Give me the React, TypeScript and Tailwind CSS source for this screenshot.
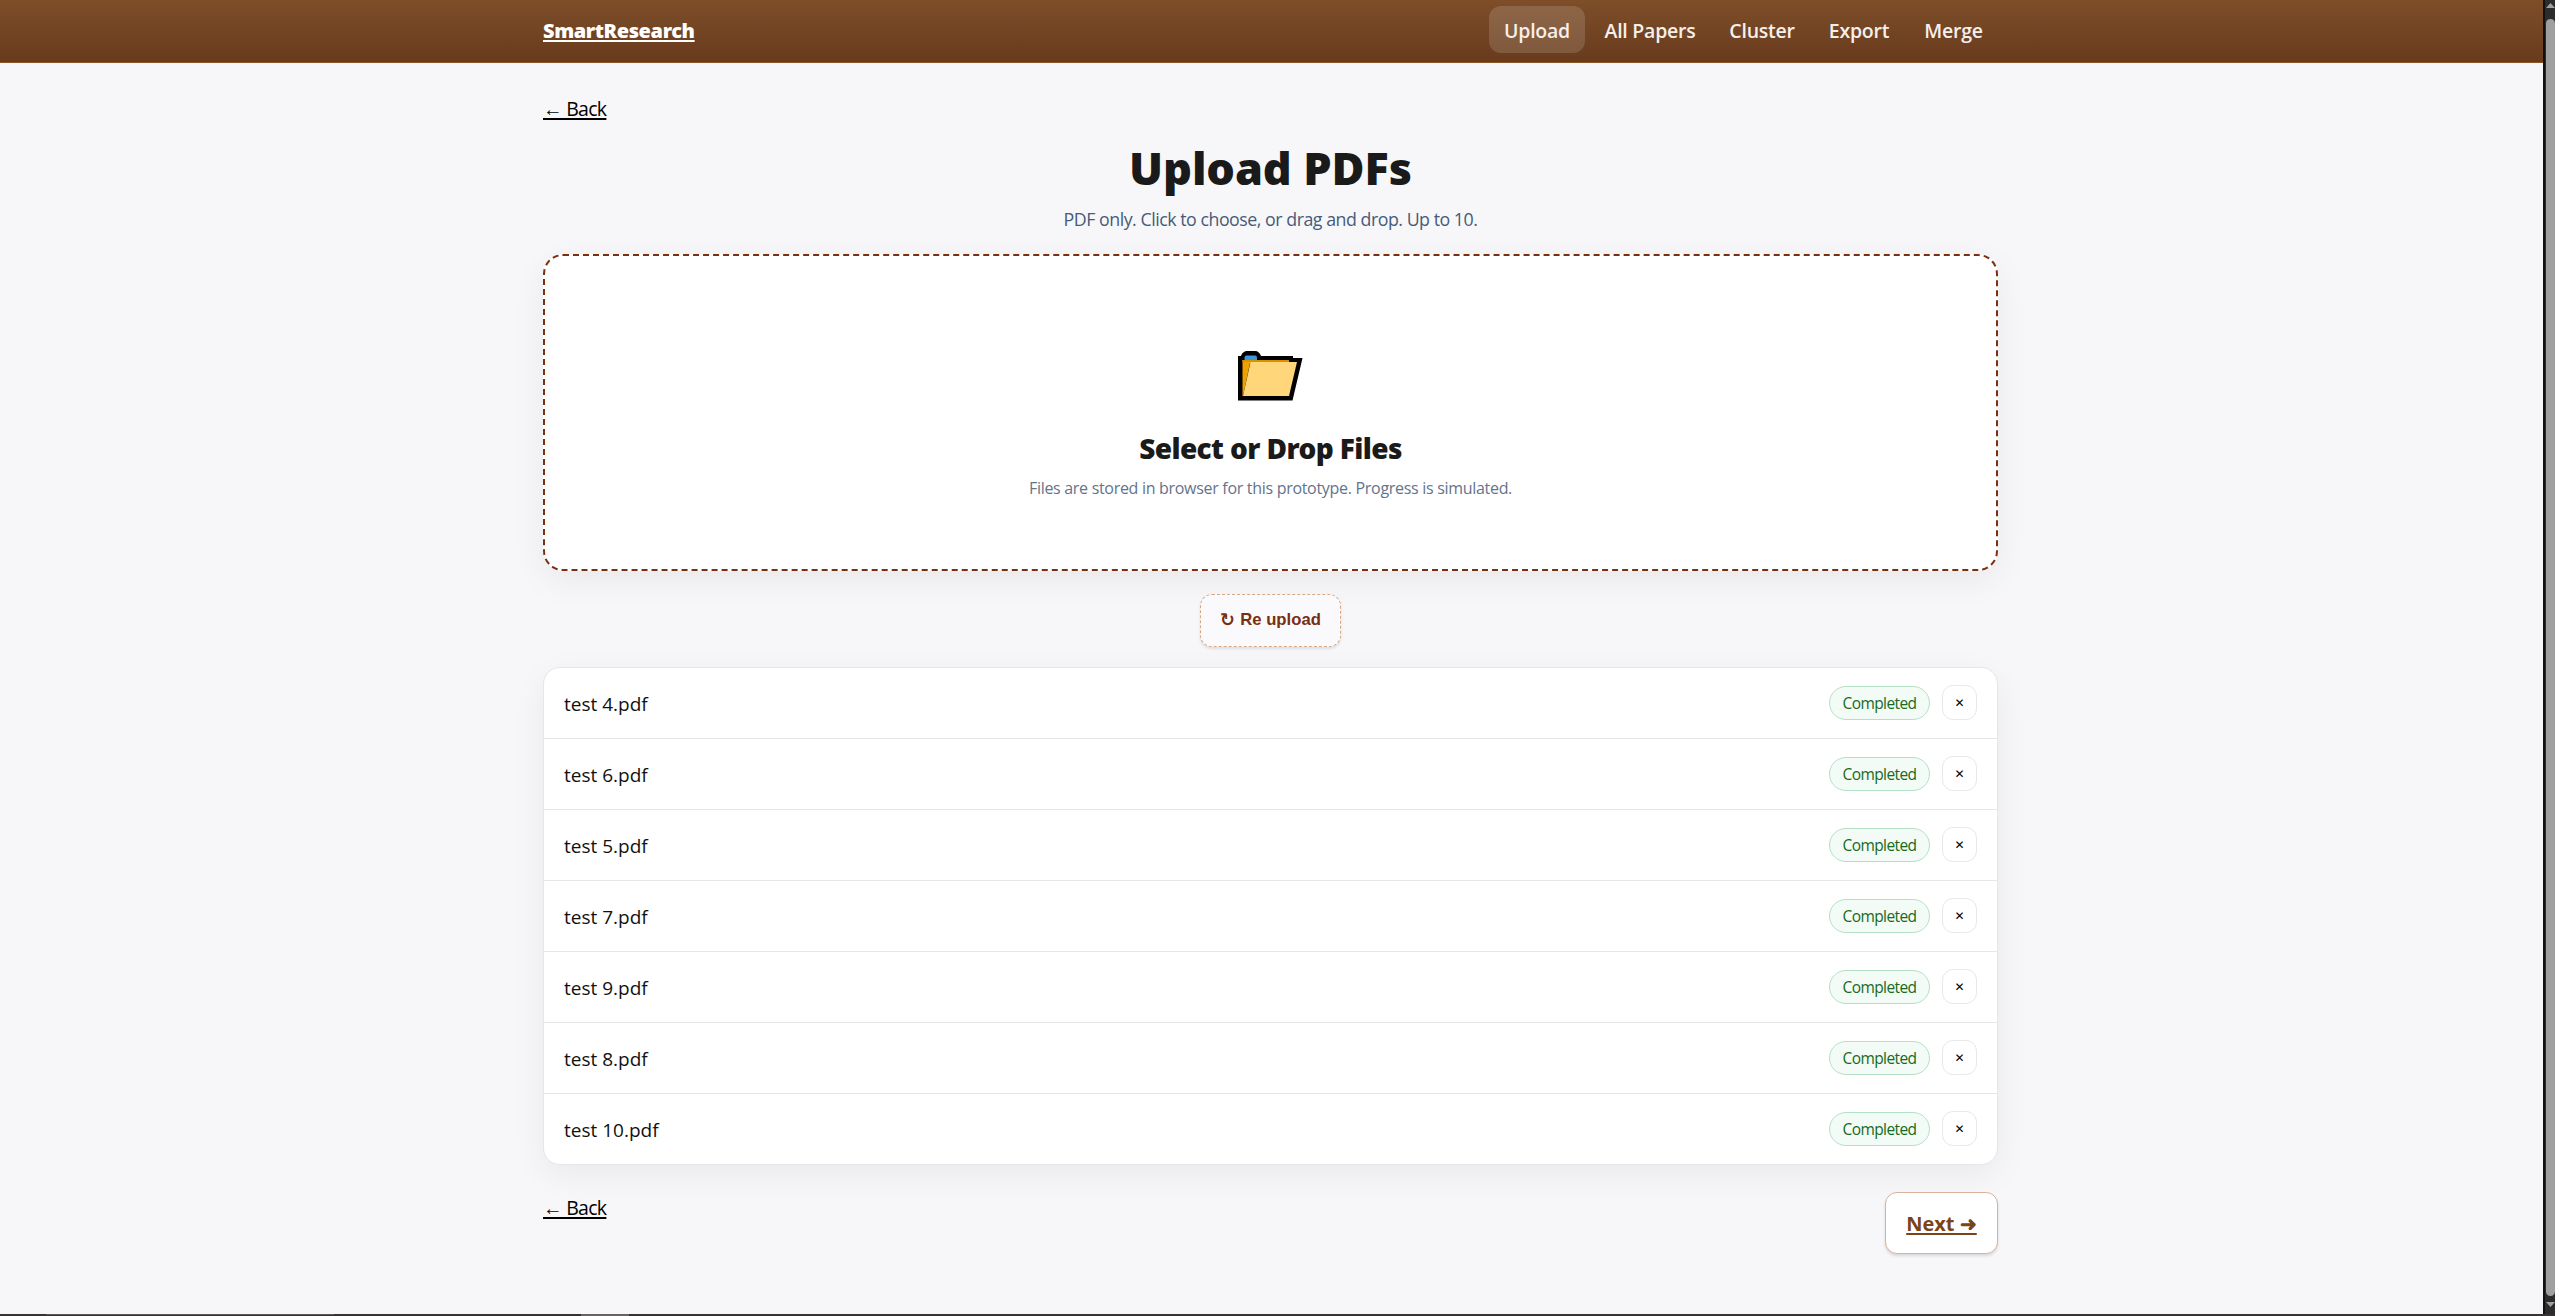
const navItems = [
  { label: "Upload", width: "w-[96px]", active: true },
  { label: "All Papers", width: "w-[122px]", active: false },
  { label: "Cluster", width: "w-[94px]", active: false },
  { label: "Export", width: "w-[92px]", active: false },
  { label: "Merge", width: "w-[89px]", active: false },
];

const files = ["test 4.pdf", "test 6.pdf", "test 5.pdf", "test 7.pdf", "test 9.pdf", "test 8.pdf", "test 10.pdf"];

function Header() {
  return (
    <header className="h-[63px] border-b border-[#8a5425] bg-linear-to-b from-[#7e4e29] to-[#683b1d]">
      <div className="ml-[543px] flex h-[62px] w-[1455px] items-center justify-between">
        <a className="font-['Noto_Sans',sans-serif] text-[20px] leading-[24px] font-black tracking-[-0.4px] whitespace-nowrap text-white underline decoration-2 underline-offset-2">
          SmartResearch
        </a>
        <nav className="mb-[3px] flex gap-1">
          {navItems.map((item) => (
            <a
              key={item.label}
              className={`flex h-[47px] items-center justify-center rounded-[12px] pt-[3px] text-[19.5px] leading-6 font-semibold tracking-[-0.25px] whitespace-nowrap text-[#f7efe9] ${item.width} ${
                item.active ? "bg-white/14" : ""
              }`}
            >
              {item.label}
            </a>
          ))}
        </nav>
      </div>
    </header>
  );
}

function BackLink() {
  return (
    <a className="block h-[26px] w-[64px] text-[19.5px] leading-[26px] tracking-[-0.7px] whitespace-nowrap text-black underline decoration-2 underline-offset-2">
      ← Back
    </a>
  );
}

function FolderIcon() {
  return (
    <svg className="block h-[50px] w-[65px]" viewBox="0 0 65 50">
      <path d="M0 5H3C4 2 6 0 10 0H17C20 0 22 2 23 5H55V7H64.500L54.500 49.500H0Z" fill="#000" />
      <path d="M6.500 9V6.500Q6.500 4.500 8.500 4.500H17Q19 4.500 19 6.500V9Z" fill="#3a96dd" />
      <path d="M4.500 9H51V12H12L5 45H4.500Z" fill="#eda200" />
      <path d="M12.500 11H59L51 45H5Z" fill="#ffd679" />
      <path d="M4.500 9H51V11H4.500Z" fill="#d99100" />
    </svg>
  );
}

function DropZone() {
  return (
    <section className="mt-[22px] flex h-[317px] flex-col items-center rounded-[20px] border-2 border-dashed border-[#7a2f0f] bg-white pt-[95px] shadow-[0_10px_34px_rgba(0,0,0,0.06)]">
      <FolderIcon />
      <h2 className="mt-[27px] font-['Noto_Sans',sans-serif] text-[28px] leading-[40px] font-black tracking-[-0.6px] text-[#1a1a1a]">
        Select or Drop Files
      </h2>
      <p className="mt-[8px] text-[16px] leading-[24px] tracking-[-0.3px] text-[#64748b]">
        Files are stored in browser for this prototype. Progress is simulated.
      </p>
    </section>
  );
}

function FileRow({ name, last }: { name: string; last: boolean }) {
  return (
    <li className={`flex items-center pr-5 pl-5 ${last ? "h-[70px]" : "h-[71px] border-b border-[#e5e6e9]"}`}>
      <span className="grow pt-[2px] text-[19px] leading-7 text-[#111]">{name}</span>
      <span className="flex h-[34px] w-[101px] items-center justify-center rounded-full border border-[#b5e0c8] bg-[#f2fbf6] text-[15.5px] leading-5 tracking-[-0.6px] text-[#166a22]">
        Completed
      </span>
      <button className="mb-px ml-3 flex h-[35px] w-[35px] items-center justify-center rounded-[11px] border border-[#e8e8ec] bg-white font-['DejaVu_Sans',sans-serif] text-[12px] leading-none text-black">
        ✕
      </button>
    </li>
  );
}

function Scrollbar() {
  return (
    <div className="flex w-3 shrink-0 flex-col items-end border-l-2 border-[#111] bg-[#2c2c2c]">
      <svg className="h-[19px] w-[9px] shrink-0" viewBox="0 0 9 19">
        <path d="M0 8L4.500 3L9 8Z" fill="#a0a0a0" />
      </svg>
      <div className="w-[9px] grow rounded-[5px] bg-[#a0a0a0]" />
      <svg className="h-[18px] w-[9px] shrink-0" viewBox="0 0 9 18">
        <path d="M0 6L4.500 11L9 6Z" fill="#a0a0a0" />
      </svg>
    </div>
  );
}

export default function App() {
  return (
    <div className="flex h-[1316px] w-[2555px] flex-col overflow-hidden bg-[#f7f7fa] font-['Open_Sans','Noto_Sans',sans-serif]">
      <div className="flex h-[1314px]">
        <div className="h-full w-[2543px]">
          <Header />
          <main className="ml-[543px] w-[1455px] pt-[33px]">
            <BackLink />
            <h1 className="mt-[16px] text-center font-['Noto_Sans',sans-serif] text-[45px] leading-[60px] font-black tracking-[-0.1px] text-[#1a1a1a]">
              Upload PDFs
            </h1>
            <p className="mt-[8px] text-center text-[17.8px] leading-[26px] tracking-[-0.48px] text-[#475b78]">
              PDF only. Click to choose, or drag and drop. Up to 10.
            </p>
            <DropZone />
            <div className="mt-[23px] flex justify-center">
              <button className="flex h-[53px] w-[141px] items-center justify-center gap-[5px] rounded-[12px] border border-dashed border-[#d9a880] bg-[#fafafc] pb-px font-['Liberation_Sans','DejaVu_Sans',sans-serif] text-[16.7px] font-bold whitespace-nowrap text-[#7a2f0f] shadow-[0_2px_3px_rgba(0,0,0,0.1)]">
                <span className="text-[18px] leading-5">↻</span>
                <span>Re upload</span>
              </button>
            </div>
            <ul className="mt-[20px] overflow-hidden rounded-[17px] border border-[#e5e6e9] bg-white shadow-[0_10px_34px_rgba(0,0,0,0.06)]">
              {files.map((name, index) => (
                <FileRow key={name} name={name} last={index === files.length - 1} />
              ))}
            </ul>
            <div className="mt-[27px] flex items-start justify-between">
              <div className="pt-[3px]">
                <BackLink />
              </div>
              <a className="flex h-[62px] w-[113px] items-center justify-center rounded-[12px] border border-[#d9b299] bg-white pt-px text-[20px] font-bold whitespace-nowrap text-[#7a4318] shadow-[0_2px_3px_rgba(0,0,0,0.12)]">
                <span className="underline decoration-2 underline-offset-2">Next ➜</span>
              </a>
            </div>
          </main>
        </div>
        <Scrollbar />
      </div>
      <div className="flex h-[2px] bg-[#353334]">
        <div className="ml-[46px] h-px w-[288px] bg-[#5a5a5a]" />
        <div className="ml-[247px] h-full w-[48px] bg-[#656364]" />
      </div>
    </div>
  );
}
